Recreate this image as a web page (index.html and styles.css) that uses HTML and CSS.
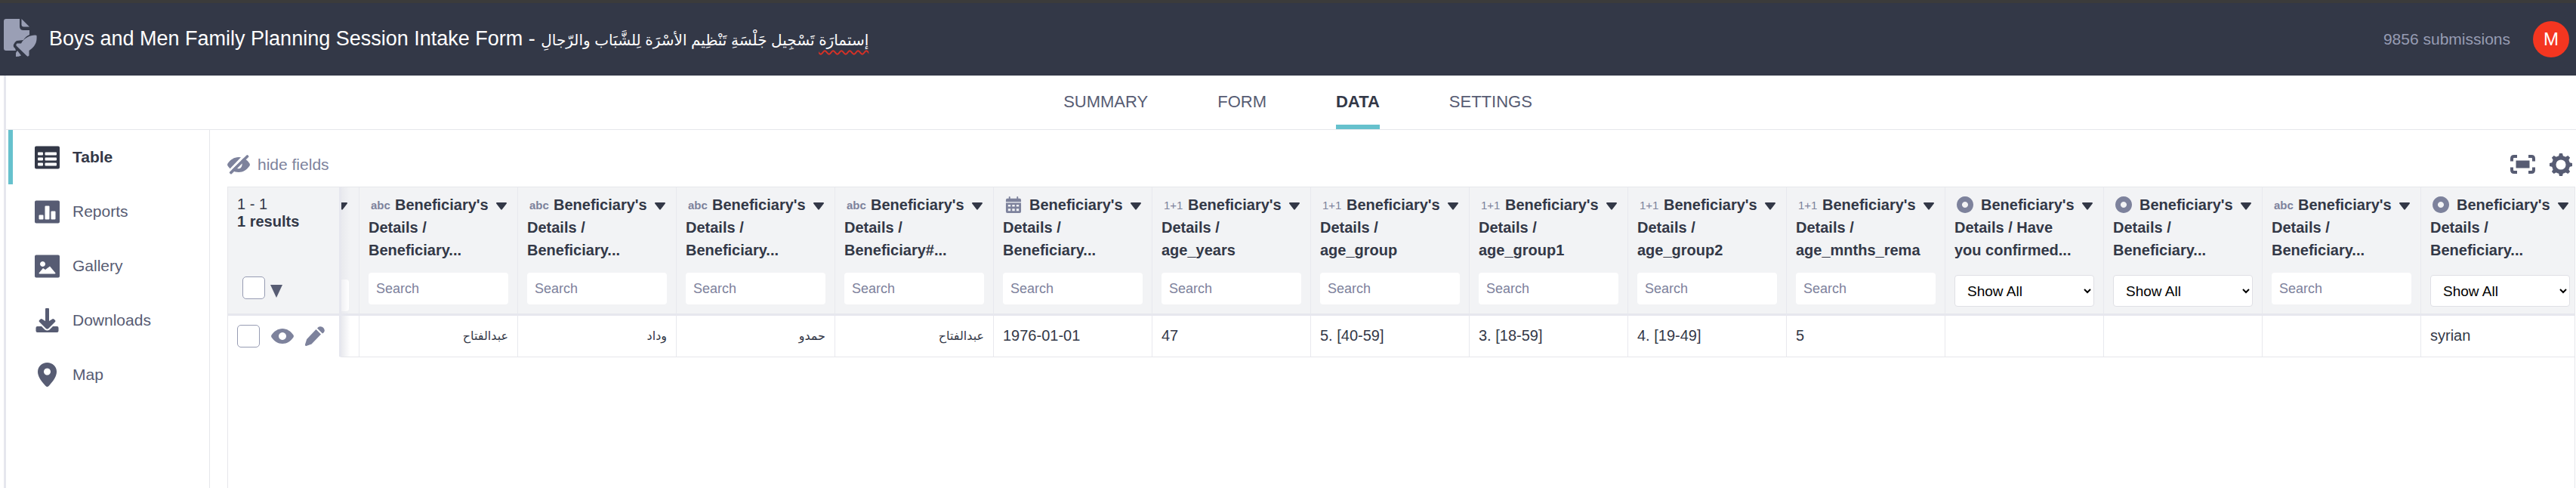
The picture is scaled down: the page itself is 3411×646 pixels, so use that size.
FILE: index.html
```html
<!DOCTYPE html>
<html lang="en">
<head>
<meta charset="utf-8">
<title>Boys and Men Family Planning Session Intake Form</title>
<link rel="stylesheet" href="styles.css">
</head>
<body>
<svg class="sprite" aria-hidden="true">
  <symbol id="i-table" viewBox="0 0 33 30"><path fill-rule="evenodd" d="M2 0h29a2 2 0 0 1 2 2v26a2 2 0 0 1-2 2H2a2 2 0 0 1-2-2V2a2 2 0 0 1 2-2zM5 8a1 1 0 0 0-1 1v2a1 1 0 0 0 1 1h5a1 1 0 0 0 1-1V9a1 1 0 0 0-1-1zM14.500 8a1 1 0 0 0-1 1v2a1 1 0 0 0 1 1H28a1 1 0 0 0 1-1V9a1 1 0 0 0-1-1zM5 15a1 1 0 0 0-1 1v2a1 1 0 0 0 1 1h5a1 1 0 0 0 1-1v-2a1 1 0 0 0-1-1zM14.500 15a1 1 0 0 0-1 1v2a1 1 0 0 0 1 1H28a1 1 0 0 0 1-1v-2a1 1 0 0 0-1-1zM5 22a1 1 0 0 0-1 1v2a1 1 0 0 0 1 1h5a1 1 0 0 0 1-1v-2a1 1 0 0 0-1-1zM14.500 22a1 1 0 0 0-1 1v2a1 1 0 0 0 1 1H28a1 1 0 0 0 1-1v-2a1 1 0 0 0-1-1z"/></symbol>
  <symbol id="i-reports" viewBox="0 0 33 30"><path fill-rule="evenodd" d="M2 0h29a2 2 0 0 1 2 2v26a2 2 0 0 1-2 2H2a2 2 0 0 1-2-2V2a2 2 0 0 1 2-2zM6.500 19a1 1 0 0 0-1 1v4a1 1 0 0 0 1 1h4a1 1 0 0 0 1-1v-4a1 1 0 0 0-1-1zM14.500 7a1 1 0 0 0-1 1v16a1 1 0 0 0 1 1h4a1 1 0 0 0 1-1V8a1 1 0 0 0-1-1zM22.500 14a1 1 0 0 0-1 1v9a1 1 0 0 0 1 1h4a1 1 0 0 0 1-1v-9a1 1 0 0 0-1-1z"/></symbol>
  <symbol id="i-gallery" viewBox="0 0 33 30"><path fill-rule="evenodd" d="M2 0h29a2 2 0 0 1 2 2v26a2 2 0 0 1-2 2H2a2 2 0 0 1-2-2V2a2 2 0 0 1 2-2zM10.500 8.500a3.500 3.500 0 1 0 .01 0zM5.500 24l5.500-6.500 3 2 6-4.500 7.500 9q0 1-1 1h-20q-1 0-1-1z"/></symbol>
  <symbol id="i-downloads" viewBox="0 0 33 33"><path d="M14 1q0-1 1-1h3q1 0 1 1v16l5-3q1 0 2 1l1 1q1 1 0 2l-9 9q-1.500 1-3 0l-9-9q-1-1 0-2l1-1q1-1 2-1l5 3z"/><path d="M3.500 24H9l4.500 4.500q3 2 6 0L24 24h5.500q2 0 2 2v4q0 2-2 2h-26q-2 0-2-2v-4q0-2 2-2z"/></symbol>
  <symbol id="i-map" viewBox="0 0 33 33"><path fill-rule="evenodd" d="M16.500 0C23.500 0 29 5 29 12c0 6-4 12-10.500 19q-2 2-4 0C8 24 4 18 4 12 4 5 9.500 0 16.500 0zm0 7.500a4.500 4.500 0 1 0 .01 0z"/></symbol>
  <symbol id="i-eye" viewBox="0 0 30 20"><path fill-rule="evenodd" d="M15 0c6 0 11 3.500 14.500 8.500q.8 1.500 0 3C26 16.500 21 20 15 20S4 16.500.5 11.500q-.8-1.500 0-3C4 3.500 9 0 15 0zm0 5a5 5 0 1 0 .01 0z"/></symbol>
  <symbol id="i-eyeoff" viewBox="0 0 30 26"><path fill-rule="evenodd" d="M15 3c6 0 11 3 14.500 8.500q.8 1.500 0 3C26 19.500 21 23 15 23S4 19.500.5 14.500q-.8-1.500 0-3C4 6.500 9 3 15 3zm2.500 5q4 4 .5 9-2 2-5 1z"/><path class="cut" d="M23-2L-1 23l2 2L25 1z"/><path d="M25.500.5q1-1 1.800 0l.7.8q.8.800 0 1.800L6 25q-1 1-1.800.2l-1-1q-.8-.8 0-1.600z"/></symbol>
  <symbol id="i-pencil" viewBox="0 0 26 26"><path d="M14.500 4L21 10.500 8.500 23.500 1.500 26Q-.3 26 0 24l2.200-7zM16 2.500Q18-.2 20.500.2C23.500.5 26 3 25.800 6q-.3 2-2.800 3.500z"/></symbol>
  <symbol id="i-full" viewBox="0 0 33 25"><path d="M7.500 7.500h18v10h-18z"/><path d="M2 8.500V5Q2 2 5 2h4M24 2h4q3 0 3 3v3.500M31 16.500V20q0 3-3 3h-4M9 23H5q-3 0-3-3v-3.500" fill="none" stroke="currentColor" stroke-width="4"/></symbol>
  <symbol id="i-gear" viewBox="-15 -15 30 30"><circle r="9.300" fill="none" stroke="currentColor" stroke-width="5.500"/><path d="M-3-11l1-4h4l1 4zM-3 11l1 4h4l1-4zM-11-3l-4 1v4l4 1zM11-3l4 1v4l-4 1zM5.700-10l3.600-2.100 2.800 2.800L10-5.700zM-5.700-10l-3.600-2.100-2.800 2.800L-10-5.700zM5.700 10l3.600 2.100 2.800-2.800L10 5.700zM-5.700 10l-3.600 2.100-2.800-2.800L-10 5.700z"/></symbol>
  <symbol id="i-cal" viewBox="0 0 21 23"><path fill-rule="evenodd" d="M4 3V1q0-1 1-1t1 1v2h9V1q0-1 1-1t1 1v2h2q2 0 2 2v2.500H0V5q0-2 2-2zM0 9h21v12q0 2-2 2H2q-2 0-2-2zm3 2.500V14h3.500v-2.500zm5.700 0V14h3.600v-2.500zm5.800 0V14H18v-2.500zM3 17v3h3.500v-3zm5.700 0v3h3.600v-3zm5.800 0v3H18v-3z"/></symbol>
  <symbol id="i-radio" viewBox="0 0 22 22"><path fill-rule="evenodd" d="M11 0a11 11 0 1 0 .01 0zm0 7a4 4 0 1 1-.01 0z"/></symbol>
  <symbol id="i-caret" viewBox="0 0 14 10"><path d="M1 0h12q1.500.5.800 1.500L8 9q-1 1.300-2 0L.2 1.500Q-.5.500 1 0z"/></symbol>
</svg>

<header class="topbar">
  <svg class="logo" viewBox="0 0 44 50" aria-hidden="true"><path d="M3 0h18v10q0 5 5 5h8v6q-5 2-8 7l-9 1q-3 2-4 5-1 3 2 5l1 3H3q-3 0-3-3V3q0-3 3-3z"/><path d="M23.500 0L34 10.500h-7.500q-3 0-3-3z"/><path d="M43.500 22c.6 8-1 14-10 20v6.500q-1.500 2-3 .5L17 36q-1.500-2 .5-3.500H23C27 25 35 21.500 41.500 21.500q1.500 0 2 .5z"/><path d="M18 42l5 6.500q-3 1.500-7 1.500v-5z"/></svg>
  <h1 class="title">Boys and Men Family Planning Session Intake Form - <bdi class="title-ar" lang="ar" dir="rtl"><span class="misspelt">إستمارَة</span> تَسْجِيل جَلْسَةِ تَنْظِيم الأسْرَة لِلشَّبَاب والرّجالِ</bdi></h1>
  <span class="count">9856 submissions</span>
  <button class="avatar" type="button" aria-label="Account">M</button>
</header>

<div class="page">
  <nav class="tabs" aria-label="Form">
    <a href="#summary">SUMMARY</a>
    <a href="#form">FORM</a>
    <a href="#data" class="active">DATA</a>
    <a href="#settings">SETTINGS</a>
  </nav>
  <div class="body">
    <nav class="side" aria-label="Data views">
      <a href="#table" class="active"><svg><use href="#i-table"/></svg>Table</a>
      <a href="#reports"><svg><use href="#i-reports"/></svg>Reports</a>
      <a href="#gallery"><svg><use href="#i-gallery"/></svg>Gallery</a>
      <a href="#downloads"><svg><use href="#i-downloads"/></svg>Downloads</a>
      <a href="#map"><svg><use href="#i-map"/></svg>Map</a>
    </nav>
    <main class="main">
      <div class="toolbar">
        <button class="hide" type="button"><svg><use href="#i-eyeoff"/></svg>hide fields</button>
        <div class="tools">
          <button type="button" aria-label="Toggle fullscreen"><svg class="full"><use href="#i-full"/></svg></button>
          <button type="button" aria-label="Display options"><svg class="gear"><use href="#i-gear"/></svg></button>
        </div>
      </div>
      <div class="tablebox">
        <table class="grid">
          <colgroup><col class="c-pin"><col class="c-peek"><col span="13"><col class="c-last"></colgroup>
          <thead id="head"></thead>
          <tbody id="rows"></tbody>
        </table>
      </div>
    </main>
  </div>
</div>
<script src="table.js"></script>
</body>
</html>
```
FILE: styles.css
```css
* { box-sizing: border-box; }
body {
  margin: 0;
  min-height: 100vh;
  display: flex;
  flex-direction: column;
  font-family: "Liberation Sans", Arial, "DejaVu Sans", sans-serif;
  font-size: 20px;
  color: #333847;
  background: #fff;
}
button { font: inherit; color: inherit; background: none; border: 0; padding: 0; cursor: pointer; }
a { color: inherit; text-decoration: none; }
svg { fill: currentColor; flex: none; }
.sprite { position: absolute; width: 0; height: 0; }

.topbar {
  display: flex;
  align-items: center;
  height: 100px;
  padding: 0 9px 0 5px;
  border-top: 4px solid #3b3b3b;
  background: #333847;
  color: #fff;
}
.logo { width: 44px; height: 50px; margin: 0 16px 4px 0; color: #9a9fb5; }
.title { margin: 0; font-size: 27px; font-weight: 400; line-height: 40px; white-space: nowrap; }
.title-ar { font-size: 20px; }
.misspelt { text-decoration: underline wavy #d93025 2px; text-underline-offset: 6px; }
.count { margin-left: auto; font-size: 21px; color: #979cb3; }
.avatar { width: 48px; height: 48px; margin-left: 30px; border-radius: 50%; background: #f43620; font-size: 24px; color: #fff; }

.page { flex: 1; display: flex; flex-direction: column; margin-left: 5px; border-left: 3px solid #e6e7ee; }
.tabs {
  display: flex;
  justify-content: center;
  gap: 92px;
  height: 72px;
  padding-left: 18px;
  border-bottom: 1px solid #e6e7eb;
  font-size: 22px;
  color: #575c73;
}
.tabs a { line-height: 70px; border-bottom: 6px solid transparent; }
.tabs .active { font-weight: 700; color: #333847; border-color: #66c1cd; }
.body { flex: 1; display: flex; }
.side { width: 270px; padding-left: 3px; border-right: 1px solid #e6e7eb; font-size: 21px; color: #575c73; }
.side a { display: flex; align-items: center; gap: 17px; height: 72px; padding-left: 29px; border-left: 6px solid transparent; }
.side svg { width: 33px; height: 33px; }
.side .active { font-weight: 700; color: #333847; border-color: #66c1cd; }

.main { flex: 1; min-width: 0; display: flex; flex-direction: column; padding: 16px 1px 0 23px; }
.toolbar { display: flex; justify-content: space-between; align-items: center; height: 59px; padding-right: 4px; }
.hide { display: flex; align-items: center; gap: 10px; font-size: 21px; color: #7d829c; }
.hide svg { width: 30px; height: 26px; }
.cut { fill: #fff; }
.tools { display: flex; align-items: center; gap: 19px; color: #575c73; }
.tools button { display: flex; }
.full { width: 33px; height: 25px; }
.gear { width: 30px; height: 30px; }

.tablebox { flex: 1; border: 1px solid #e6e7eb; border-bottom: 0; overflow: hidden; }
.grid { width: 100%; table-layout: fixed; border-collapse: separate; border-spacing: 0; }
.c-pin { width: 150px; }
.c-peek { width: 24px; }
.c-last { width: 203px; }
th, td { padding: 0 12px; border-right: 1px solid #e8e9ee; text-align: left; }
th:last-child, td:last-child { border-right: 0; padding-right: 6px; }
th { height: 170px; padding-top: 8px; vertical-align: top; background: #f2f3f5; border-bottom: 3px solid #e6e7ee; line-height: 30px; }
td { height: 55px; padding-bottom: 2px; border-bottom: 1px solid #e6e7eb; white-space: nowrap; }
.pin { border-right: 3px solid #e6e7ee; }
td.pin { padding-bottom: 0; border-bottom-color: #fff; }
.peek { padding-left: 0; padding-right: 0; overflow: hidden; background-image: linear-gradient(90deg, #e9eaee, transparent 12px); }
.peek .caret { display: block; margin: 12px 0 92px -6px; }
.stub { display: block; width: 10px; height: 42px; border-radius: 0 4px 4px 0; background: linear-gradient(90deg, #f0f0f3, #fff 10px); }

.headline { display: flex; justify-content: space-between; height: 105px; padding-right: 2px; }
.name { white-space: nowrap; }
.line { display: flex; align-items: center; height: 30px; }
.kind { flex: none; width: 35px; padding: 2px 0 0 3px; font-size: 15px; font-weight: 700; color: #7d829c; }
.kind.num { font-weight: 400; }
.kind.pic { padding-top: 0; }
.kind svg { display: block; width: 22px; height: 22px; }
.caret { width: 14px; height: 10px; margin-top: 12px; }
.search, .pick { display: block; width: 100%; height: 42px; border-radius: 4px; background: #fff; font-family: inherit; }
.search { border: 0; padding: 0 10px; font-size: 18px; color: #333847; }
.search::placeholder { color: #7d829c; opacity: 1; }
.pick { margin-top: 3px; border: 1px solid #dfe0e5; padding: 0 0 0 12px; font-size: 19px; color: #000; }

.results { height: 110px; padding-top: 3px; line-height: 23px; font-weight: 400; }
.results strong { display: block; }
.selectall { display: flex; align-items: center; gap: 7px; padding-left: 7px; }
.selectall svg { width: 16px; height: 17px; margin-top: 8px; color: #575c73; }
.box { appearance: none; width: 30px; height: 30px; margin: 0; border: 1px solid #979cb3; border-radius: 5px; background: #fff; }
.actions { display: flex; align-items: center; color: #7d829c; margin-right: -10px; }
.actions button { display: flex; margin-left: 15px; }
.eye { width: 30px; height: 20px; }
.pencil { width: 26px; height: 26px; }
.rtl { text-align: right; font-size: 16px; }
```
FILE: table.js
```js
const B = "Beneficiary's";
const columns = [
  ["abc", "Details /", "Beneficiary...", "عبدالفتاح"],
  ["abc", "Details /", "Beneficiary...", "وداد"],
  ["abc", "Details /", "Beneficiary...", "حمدو"],
  ["abc", "Details /", "Beneficiary#...", "عبدالفتاح"],
  ["cal", "Details /", "Beneficiary...", "1976-01-01"],
  ["num", "Details /", "age_years", "47"],
  ["num", "Details /", "age_group", "5. [40-59]"],
  ["num", "Details /", "age_group1", "3. [18-59]"],
  ["num", "Details /", "age_group2", "4. [19-49]"],
  ["num", "Details /", "age_mnths_rema", "5"],
  ["radio", "Details / Have", "you confirmed...", ""],
  ["radio", "Details /", "Beneficiary...", ""],
  ["abc", "Details /", "Beneficiary...", ""],
  ["radio", "Details /", "Beneficiary...", "syrian"]
];
const icon = (id, cls = "") => `<svg class="${cls}" aria-hidden="true"><use href="#i-${id}"/></svg>`;
const kinds = {
  abc: '<span class="kind">abc</span>',
  num: '<span class="kind num">1+1</span>',
  cal: `<span class="kind pic">${icon("cal")}</span>`,
  radio: `<span class="kind pic">${icon("radio")}</span>`
};
const head = ([kind, l2, l3]) => {
  const label = `${B} ${l2} ${l3}`;
  const filter = kind === "radio"
    ? `<select class="pick" aria-label="${label}"><option>Show All</option></select>`
    : `<input class="search" type="text" placeholder="Search" aria-label="${label}">`;
  return `<th scope="col"><div class="headline"><div class="name"><div class="line">${kinds[kind]}${B}</div>${l2}<br>${l3}</div>${icon("caret", "caret")}</div>${filter}</th>`;
};
const cell = (c) => /[\u0600-\u06ff]/.test(c[3])
  ? `<td class="rtl"><bdi dir="rtl" lang="ar">${c[3]}</bdi></td>`
  : `<td>${c[3]}</td>`;

document.getElementById("head").innerHTML =
  `<tr><th class="pin" scope="col"><div class="results">1 - 1<strong>1 results</strong></div>
   <div class="selectall"><input class="box" type="checkbox" aria-label="Select all"><svg viewBox="0 0 16 17"><path d="M0 0h16L8 17z"/></svg></div></th>
   <th class="peek">${icon("caret", "caret")}<span class="stub"></span></th>${columns.map(head).join("")}</tr>`;
document.getElementById("rows").innerHTML =
  `<tr><td class="pin"><div class="actions"><input class="box" type="checkbox" aria-label="Select row">
   <button type="button" aria-label="Open">${icon("eye", "eye")}</button>
   <button type="button" aria-label="Edit">${icon("pencil", "pencil")}</button></div></td>
   <td class="peek"></td>${columns.map(cell).join("")}</tr>`;
```
